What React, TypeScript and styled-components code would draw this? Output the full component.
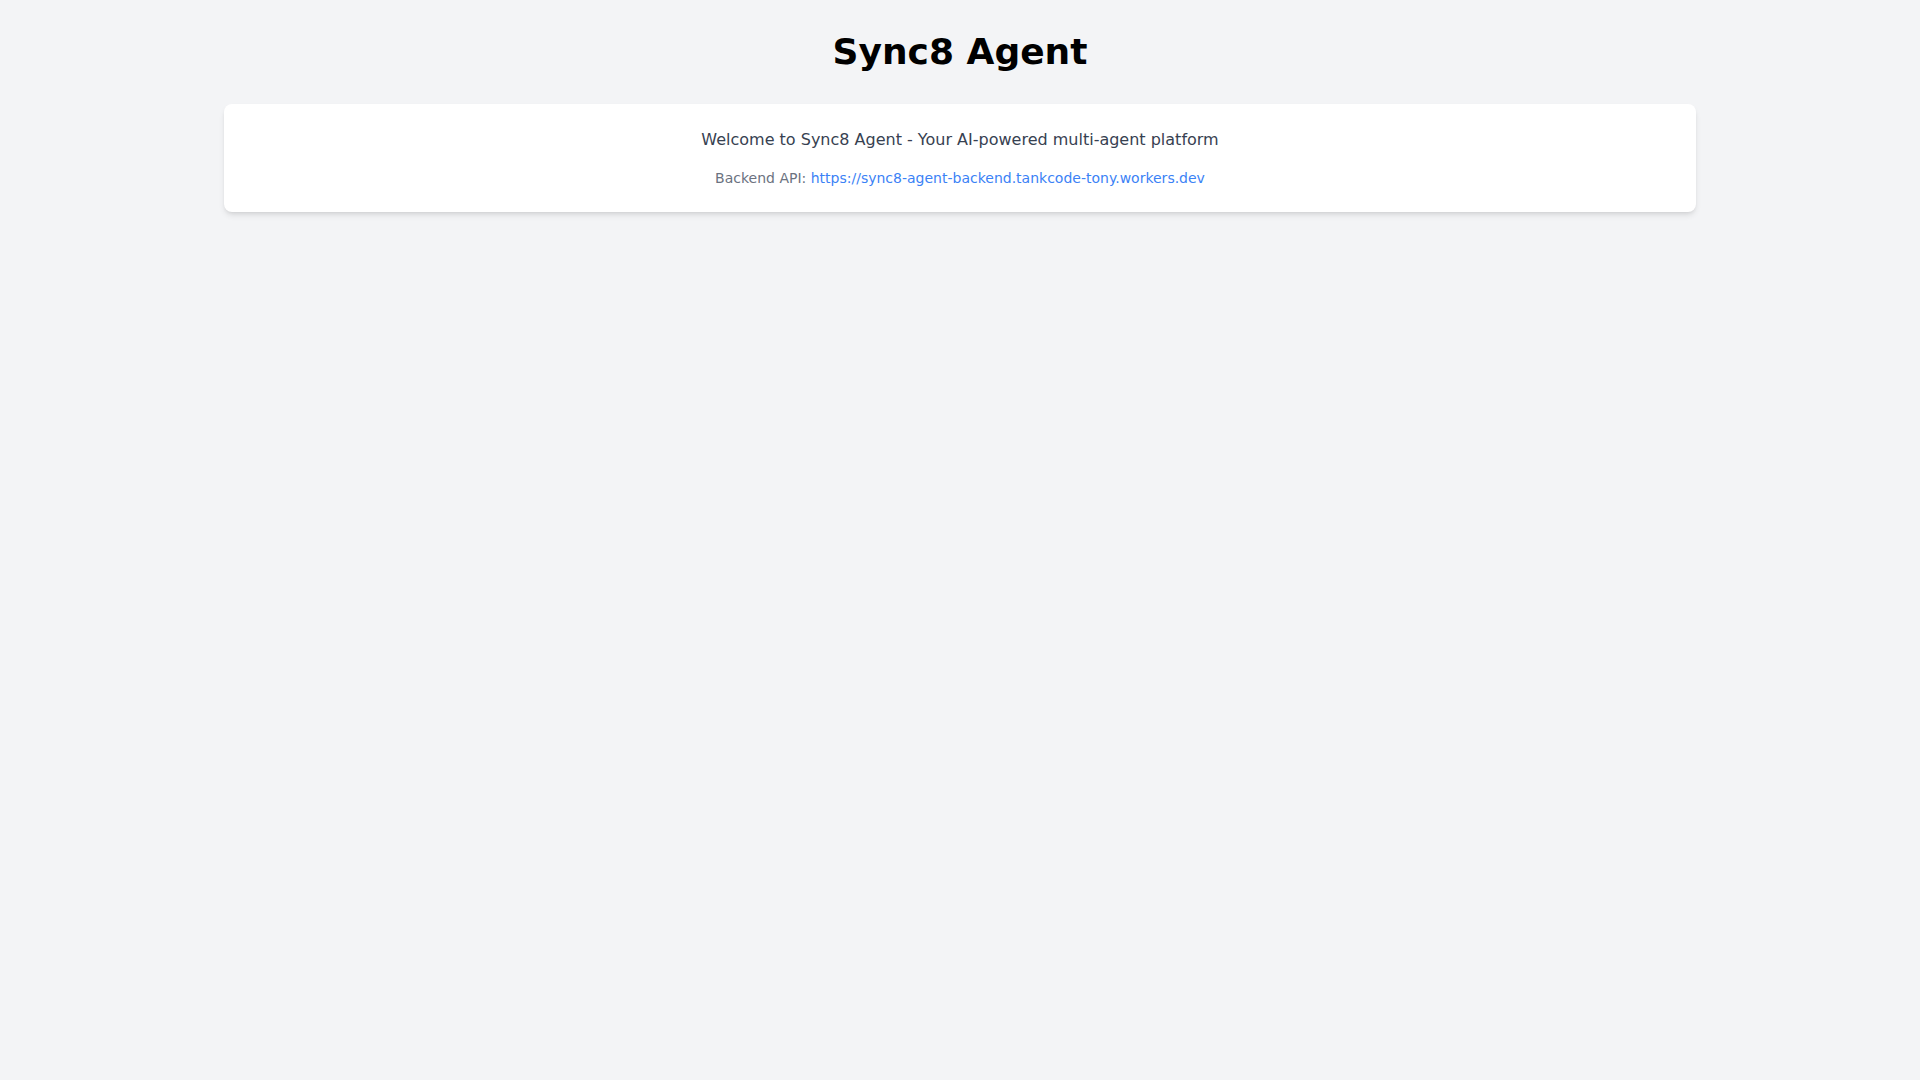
import React from "react";
import styled, { createGlobalStyle } from "styled-components";

const GlobalStyle = createGlobalStyle`
  html, body {
    margin: 0;
    padding: 0;
    background: #f3f4f6;
    font-family: "DejaVu Sans", sans-serif;
  }
  body {
    min-height: 100vh;
  }
  * { box-sizing: border-box; }
`;

const Page = styled.div`
  min-height: 100vh;
  background: #f3f4f6;
`;

const Container = styled.main`
  max-width: 1536px;
  margin: 0 auto;
  padding: 32px;
`;

const Title = styled.h1`
  margin: 0 0 32px;
  font-size: 36px;
  line-height: 40px;
  font-weight: 700;
  text-align: center;
  color: #000;
`;

const Card = styled.section`
  background: #ffffff;
  border-radius: 8px;
  box-shadow: 0 4px 6px -1px rgba(0, 0, 0, 0.1), 0 2px 4px -2px rgba(0, 0, 0, 0.1);
  padding: 24px;
  text-align: center;
`;

const Welcome = styled.p`
  margin: 0 0 16px;
  font-size: 16px;
  line-height: 24px;
  color: #374151;
`;

const Meta = styled.p`
  margin: 0;
  font-size: 14px;
  line-height: 20px;
  color: #6b7280;
`;

const Link = styled.a`
  color: #3b82f6;
  text-decoration: none;
`;

export default function App() {
  return (
    <Page>
      <GlobalStyle />
      <Container>
        <Title>Sync8 Agent</Title>
        <Card>
          <Welcome>Welcome to Sync8 Agent - Your AI-powered multi-agent platform</Welcome>
          <Meta>
            Backend API:{" "}
            <Link href="https://sync8-agent-backend.tankcode-tony.workers.dev">
              https://sync8-agent-backend.tankcode-tony.workers.dev
            </Link>
          </Meta>
        </Card>
      </Container>
    </Page>
  );
}
